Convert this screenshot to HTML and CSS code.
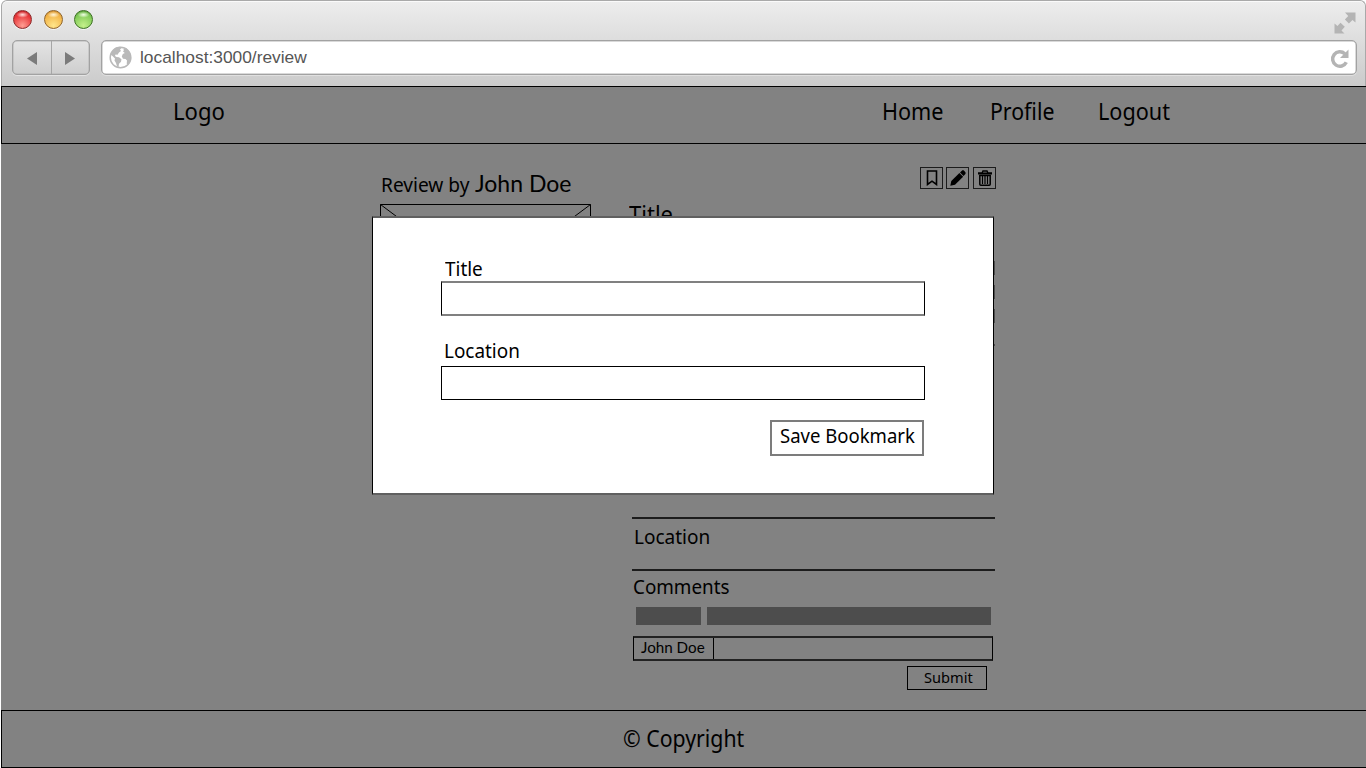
FILE: index.html
```html
<!DOCTYPE html>
<html lang="en">
<head>
<meta charset="utf-8">
<title>Review</title>
<link rel="stylesheet" href="styles.css">
</head>
<body>
<div class="browser">
  <div class="chrome">
    <div class="titlebar">
      <div class="lights">
        <span class="light red"></span><span class="light yellow"></span><span class="light green"></span>
      </div>
      <svg class="expand" width="22" height="22" viewBox="0 0 22 22" fill="#b4b4b4"><path d="M11 0.500h10.500v10l-3-2.500-3.600 3.600-4-4L14.200 4z"/><path d="M0.500 11.500l3 2.500 3-3.200 4.300 4-3.300 3.600 3 3.100h-10z"/></svg>
    </div>
    <div class="toolbar">
      <div class="history">
        <span class="hbtn"><svg width="10" height="13" viewBox="0 0 10 13"><path d="M10 0v13L0 6.500z" fill="#7b7b7b"/></svg></span>
        <span class="hbtn"><svg width="10" height="13" viewBox="0 0 10 13"><path d="M0 0v13l10-6.500z" fill="#7b7b7b"/></svg></span>
      </div>
      <div class="url">
        <svg width="23" height="23" viewBox="0 0 23 23"><circle cx="11.500" cy="11.500" r="10.300" fill="#fff" stroke="#b9b9b9" stroke-width="1.500"/><path fill="#b9b9b9" d="M4 4l3-2.500 4-.7 1.500 1.200-1.500 1.500 1 1.500-2 1.500-1.500 2.300-2-.3-.5 1.500 1.500 1 2.500.2 2.500 2-.5 2.500-2 2-.5 3.300-1.500-.5-1-3.500-1.500-2.500.5-2-2.500-2.500-2-1.500z"/><path fill="#b9b9b9" d="M14.500 3l2.500-1 3 3 2 4.500.2 3.500-1.500 4-2 2.200-1-1.700.3-3-1.500-1.500-2.500-.3-1.200-2.200 1-2.500 2-1-1.800-1.500.8-1z"/></svg>
        <span class="address">localhost:3000/review</span>
        <svg class="reload" width="20" height="20" viewBox="0 0 20 20"><path d="M16.300 13.200A7.200 7.200 0 1 1 14.800 4.800" fill="none" stroke="#b4b4b4" stroke-width="3.500"/><path d="M18.500.5v8.600H10z" fill="#b4b4b4"/></svg>
      </div>
    </div>
  </div>

  <div class="page">
    <header class="navbar">
      <span class="logo lg">Logo</span>
      <nav class="nav lg"><a class="t home">Home</a><a class="t profile">Profile</a><a class="t logout">Logout</a></nav>
    </header>

    <main class="main">
      <section class="author-col">
        <div class="byline"><span class="by">Review by</span><span class="name">John Doe</span></div>
        <svg class="photo" width="211" height="158" viewBox="0 0 211 158" fill="none" stroke="#000"><path d="M.5.5h210v157H.5zM.5.5l210 157M210.500.5L.5 157.500"/></svg>
      </section>
      <section class="review-col">
        <div class="actions">
          <span class="action"><svg width="12" height="16" viewBox="0 0 12 16"><path d="M1.500 1h9v13.500L6 11.200l-4.500 3.300z" fill="none" stroke="#000" stroke-width="1.600"/></svg></span>
          <span class="action"><svg width="16" height="16" viewBox="0 0 16 16"><path d="M.3 15.700l1-4.700L9.400 3l3.700 3.700-8.100 8z"/><path d="M10 2.500L11.800.8c.7-.6 1.700-.6 2.300 0l1.100 1.100c.6.600.6 1.600 0 2.300l-1.700 1.800z"/></svg></span>
          <span class="action"><svg width="14" height="16" viewBox="0 0 14 16"><path d="M0 2.300h3.700l.8-2h5l.8 2H14v2.300H0zM5 2.500h4l-.4-.8H5.400z" fill-rule="evenodd"/><path d="M1.800 5.500h10.400v8.700c0 .6-.4 1-1 1H2.800c-.6 0-1-.4-1-1z" fill="none" stroke="#000" stroke-width="1.500"/><path d="M4.500 6v8M7 6v8M9.500 6v8" stroke="#000" stroke-width="1.200"/></svg></span>
        </div>
        <h1 class="title lg"><span class="t">Title</span></h1>
        <div class="lines"><i></i><i></i><i></i><i class="end"></i></div>
        <div class="place sm"><span>Location</span></div>
        <div class="comments sm"><span>Comments</span></div>
        <div class="comment"><i class="who"></i><i class="what"></i></div>
        <div class="entry"><span class="me">John Doe</span></div>
        <div class="submit">Submit</div>
      </section>
    </main>

    <footer class="footer lg"><span>© Copyright</span></footer>
  </div>

  <div class="modal">
    <label class="label sm">Title</label>
    <div class="field soft"></div>
    <label class="label second sm">Location</label>
    <div class="field"></div>
    <div class="save sm"><span>Save Bookmark</span></div>
  </div>
</div>
</body>
</html>
```
FILE: styles.css
```css
* { box-sizing: border-box; }
body { margin: 0; background: #fff; color: #000; font-family: "Noto Sans", sans-serif; }
svg { display: block; flex: none; }
.browser { position: relative; width: 1366px; height: 768px; overflow: hidden; display: flex; flex-direction: column; }

.chrome { height: 86px; margin-left: 1px; border: 1px solid #a9a9a9; border-bottom: 0; border-radius: 6px 6px 0 0; background: linear-gradient(#ededed, #cbcbcb); box-shadow: inset 0 1px 0 #fafafa; padding: 9px 8px 0 11px; }
.titlebar { display: flex; justify-content: space-between; height: 30px; }
.lights { display: flex; gap: 11.500px; }
.light { width: 19px; height: 19px; border-radius: 50%; border: 1px solid; box-shadow: 0 1px 0 rgba(255,255,255,.6); }
.red { border-color: #8c2b2b; background: radial-gradient(ellipse 6px 3px at 50% 22%, #ffe3e0, transparent), radial-gradient(circle at 50% 85%, #ff9d92, #e8373a 65%, #b81f25); }
.yellow { border-color: #8f642a; background: radial-gradient(ellipse 6px 3px at 50% 22%, #fff6dc, transparent), radial-gradient(circle at 50% 85%, #ffe58a, #f3b64a 65%, #c98428); }
.green { border-color: #3c7022; background: radial-gradient(ellipse 6px 3px at 50% 22%, #f1ffe6, transparent), radial-gradient(circle at 50% 85%, #c4f08a, #84cc5a 65%, #4e9632); }
.expand { margin: 2px 1px 0 0; }
.toolbar { display: flex; gap: 11px; height: 35px; margin-left: -1px; }
.history { display: flex; width: 78px; border: 1.500px solid #a2a2a2; border-radius: 5px; background: linear-gradient(#e4e4e4, #cecece); box-shadow: 0 1px 0 #e4e4e4, inset 0 0 0 .5px #b4b4b4; }
.hbtn { flex: 1; display: flex; align-items: center; justify-content: center; padding-top: 1px; }
.hbtn + .hbtn { border-left: 1px solid #a6a6a6; }
.url { flex: 1; display: flex; align-items: center; border: 1.500px solid #a2a2a2; border-radius: 5px; background: #fff; padding: 0 6px 0 7px; box-shadow: 0 1px 0 #e0e0e0, inset 0 0 0 .5px #b4b4b4; }
.address { flex: 1; margin-left: 8px; font: 17.350px/20px "Liberation Sans", Arial, sans-serif; color: #555; padding-bottom: 1px; }
.reload { margin-top: 2px; }

.page { flex: 1; margin-left: 1px; background: #828282; display: flex; flex-direction: column; }
.lg { font-size: 23px; line-height: 24px; }
.sm { font-size: 19.500px; line-height: 22px; }
.t, .lg span, .sm span, .label { display: inline-block; transform-origin: 0 50%; }
.t { transform: scaleX(.94); }

.navbar { height: 58px; border: 1px solid #000; border-right: 0; display: flex; align-items: flex-start; padding: 12px 0 0 171px; }
.logo { width: 709px; transform-origin: 0 50%; transform: scaleX(.96); }
.nav { display: flex; }
.nav a { width: 108px; }
.nav .profile { transform: scaleX(.925); }

.main { flex: 1; display: flex; padding: 23px 0 0 379px; }
.author-col { width: 252px; padding-top: 4px; }
.byline { display: flex; line-height: 24px; height: 24px; align-items: baseline; }
.by { width: 94px; font-size: 19.500px; margin-left: 1px; transform-origin: 0 50%; transform: scaleX(.98); white-space: nowrap; }
.name { font: 23px/24px Lato, sans-serif; }
.photo { margin-top: 9px; }
.review-col { width: 364px; display: flex; flex-direction: column; }
.actions { display: flex; justify-content: flex-end; gap: 4px; height: 22px; }
.action { width: 23px; height: 22px; border: 1px solid #1c1c1c; display: flex; align-items: center; justify-content: center; }
.action:first-child { margin-right: -1px; padding-left: 1px; }
.title { margin: 13px 0 0 -3px; font-weight: 400; height: 24px; }
.title .t { transform: scaleX(.958); }
.lines { display: flex; flex-direction: column; gap: 10px; height: 256px; margin: 35px 1px 0 0; }
.lines i { height: 14px; background: #4d4d4d; }
.lines .end { height: 2px; margin-top: 11px; }
.place { height: 52px; border-top: 2px solid #1c1c1c; padding: 7px 0 0 2px; margin-right: 1px; }
.comments { height: 38px; border-top: 2px solid #1c1c1c; padding: 5px 0 0 1px; margin-right: 1px; }
.place span { transform: scaleX(.975); }
.comments span { transform: scaleX(.965); }
.comment { display: flex; gap: 6px; padding: 0 5px 0 4px; height: 18px; }
.comment i { background: #4d4d4d; }
.who { width: 65px; }
.what { flex: 1; }
.entry { margin: 11px 3px 0 1px; height: 25px; border: 1.500px solid #000; border-top: 2px solid #222; border-bottom: 2px solid #222; display: flex; }
.me { width: 80px; border-right: 1px solid #000; font: 15.200px/18px Lato, sans-serif; padding-left: 7px; }
.submit { align-self: flex-end; margin: 5px 9px 0 0; width: 80px; height: 24px; border: 1px solid #000; font-size: 14.600px; line-height: 21px; padding-left: 16px; }

.footer { height: 58px; border: 1px solid #000; border-right: 0; padding: 15px 0 0 621px; }
.footer span { transform: scaleX(.925); }

.modal { position: absolute; left: 372px; top: 216px; width: 622px; height: 279px; background: #fff; border: 1px solid #000; border-top: 2px solid #606060; border-bottom: 2px solid #606060; padding: 40px 68px 0; display: flex; flex-direction: column; }
.label { height: 22px; margin: 0 0 1px 4px; transform: scaleX(.97); }
.second { margin: 24px 0 4px 3px; }
.field { height: 34px; border: 1px solid #000; }
.soft { height: 35px; border-top: 2px solid #808080; border-bottom: 2px solid #808080; }
.save { align-self: flex-end; margin: 20px 1px 0 0; width: 154px; height: 36px; border: 2px solid #7c7c7c; padding: 3px 0 0 8px; white-space: nowrap; }
.save span { transform: scaleX(.95); }
```
